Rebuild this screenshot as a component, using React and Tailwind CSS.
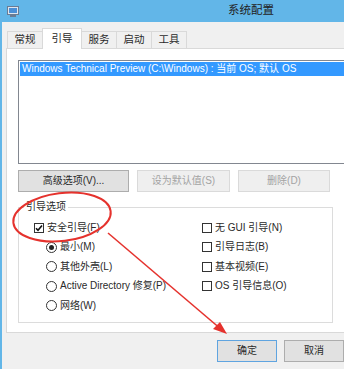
import React from "react";

const tabs = ["常规", "引导", "服务", "启动", "工具"];

function Check({ checked }) {
    return (
        <span className="w-[10px] h-[10px] border border-[#333] bg-white flex items-center justify-center shrink-0">
            {checked && (
                <svg width="8" height="8" viewBox="0 0 8 8">
                    <path d="M1 4.2 L3 6.3 L7 1.4" fill="none" stroke="#111" strokeWidth="1.6" />
                </svg>
            )}
        </span>
    );
}

function Radio({ checked }) {
    return (
        <span className="w-[11px] h-[11px] rounded-full border border-[#333] bg-white flex items-center justify-center shrink-0">
            {checked && <span className="w-[5px] h-[5px] rounded-full bg-[#222]" />}
        </span>
    );
}

function Row({ children, className = "" }) {
    return <div className={`h-[19.5px] flex items-center gap-[3px] ${className}`}>{children}</div>;
}

export default function App() {
    return (
        <div className="relative w-[344px] h-[369px] overflow-hidden bg-[#f0f0f0] font-['Liberation_Sans','Noto_Sans_CJK_SC',sans-serif] text-[10px] text-[#2a2a2a] leading-none">
            {/* title bar */}
            <div className="h-[22px] bg-[#62b6e8] flex items-center">
                <svg width="12" height="11" viewBox="0 0 12 11" className="ml-[7px]">
                    <rect x="0.5" y="0.5" width="11" height="8" fill="#dfe6ef" stroke="#6a7b93" />
                    <rect x="2" y="2" width="8" height="5" fill="#4a8fd6" />
                    <rect x="3" y="9" width="6" height="2" fill="#6a7b93" />
                </svg>
                <span className="ml-[209px] text-[11.5px] text-[#222]">系统配置</span>
            </div>

            <div className="border-l-2 border-[#62b6e8] h-[347px] pl-[4px]">
                {/* tabs */}
                <div className="flex items-end h-[27px] ml-[1px] text-[10.5px]">
                    {tabs.map((t, i) =>
                        t === "引导" ? (
                            <div key={t} className="relative z-10 -ml-px w-[40px] h-[21px] bg-white border border-b-0 border-[#d9d9d9] flex items-start justify-center pt-[4px]">
                                {t}
                            </div>
                        ) : (
                            <div key={t} className={`${i > 0 ? "-ml-px" : ""} w-[36px] h-[18px] bg-[#f0f0f0] border border-[#d9d9d9] flex items-center justify-center pb-[1px]`}>
                                {t}
                            </div>
                        )
                    )}
                </div>

                {/* panel */}
                <div className="-mt-px w-[360px] h-[285px] bg-white border border-[#d9d9d9] pt-[11px] pl-[11px]">
                    <div className="w-[340px] h-[104px] border border-[#828790] bg-white p-px">
                        <div className="h-[14px] bg-[#3399ff] text-white flex items-center pl-[2px] whitespace-nowrap">
                            Windows Technical Preview (C:\Windows) : 当前 OS; 默认 OS
                        </div>
                    </div>

                    <div className="flex gap-[8px] mt-[6px]">
                        <button className="w-[111px] h-[22px] bg-[#e1e1e1] border border-[#adadad] text-[#2a2a2a]">高级选项(V)...</button>
                        <button className="w-[93px] h-[22px] bg-[#efefef] border border-[#dadada] text-[#a3a3a3]">设为默认值(S)</button>
                        <button className="w-[92px] h-[22px] bg-[#efefef] border border-[#dadada] text-[#a3a3a3]">删除(D)</button>
                    </div>

                    <fieldset className="mt-[7px] w-[315px] h-[124px] border border-[#dcdcdc]">
                        <legend className="ml-[5px] px-[2px] h-[16px] leading-[16px]">引导选项</legend>
                        <div className="grid grid-cols-[168px_1fr] pl-[15px] pt-[3px]">
                            <div>
                                <Row>
                                    <Check checked />
                                    <span>安全引导(F)</span>
                                </Row>
                                <Row className="pl-[12px]">
                                    <Radio checked />
                                    <span>最小(M)</span>
                                </Row>
                                <Row className="pl-[12px]">
                                    <Radio />
                                    <span>其他外壳(L)</span>
                                </Row>
                                <Row className="pl-[12px]">
                                    <Radio />
                                    <span>Active Directory 修复(P)</span>
                                </Row>
                                <Row className="pl-[12px]">
                                    <Radio />
                                    <span>网络(W)</span>
                                </Row>
                            </div>
                            <div>
                                <Row>
                                    <Check />
                                    <span>无 GUI 引导(N)</span>
                                </Row>
                                <Row>
                                    <Check />
                                    <span>引导日志(B)</span>
                                </Row>
                                <Row>
                                    <Check />
                                    <span>基本视频(E)</span>
                                </Row>
                                <Row>
                                    <Check />
                                    <span>OS 引导信息(O)</span>
                                </Row>
                            </div>
                        </div>
                    </fieldset>
                </div>

                <div className="flex gap-[7px] mt-[7px] ml-[211px]">
                    <button className="w-[64px] h-[22px] bg-[#e1e1e1] border border-[#5fa4e0]">确定</button>
                    <button className="w-[64px] h-[22px] bg-[#e1e1e1] border border-[#adadad]">取消</button>
                </div>
            </div>

            {/* red annotation */}
            <svg className="absolute inset-0 pointer-events-none" width="344" height="369" viewBox="0 0 344 369">
                <ellipse cx="62" cy="217" rx="49" ry="24" fill="none" stroke="#e5322d" strokeWidth="2" transform="rotate(-7 62 217)" />
                <line x1="108" y1="233" x2="222" y2="330" stroke="#e5322d" strokeWidth="1.6" />
                <polygon points="227,334 213,329 220,322" fill="#e5322d" />
            </svg>
        </div>
    );
}
